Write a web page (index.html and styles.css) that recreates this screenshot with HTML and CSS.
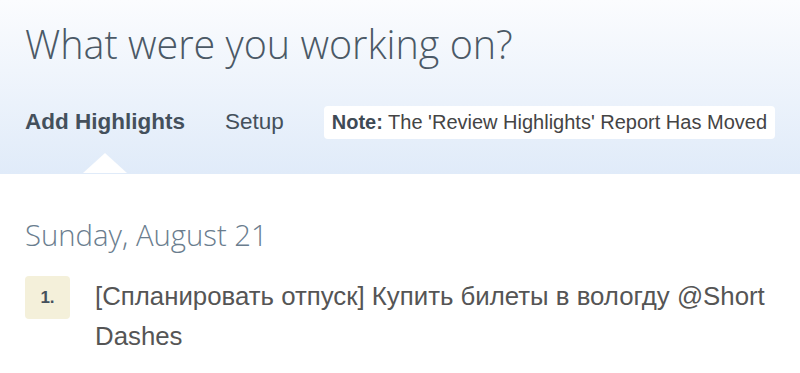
FILE: index.html
```html
<!DOCTYPE html>
<html lang="en">
<head>
    <meta charset="UTF-8">
    <title>What were you working on?</title>
    <link rel="stylesheet" href="styles.css">
</head>
<body>

<div class="header">
    <h1>What were you working on?</h1>
    <div class="nav">
        <a class="tab active" href="#">Add Highlights</a>
        <a class="tab" href="#">Setup</a>
        <span class="note"><b>Note:</b> The 'Review Highlights' Report Has Moved</span>
    </div>
</div>

<div class="content">
    <h2>Sunday, August 21</h2>
    <div class="highlight">
        <span class="num">1.</span>
        <span class="text">[Спланировать отпуск] Купить билеты в вологду @Short Dashes</span>
    </div>
</div>

</body>
</html>
```

FILE: styles.css
```css
body {
    margin: 0;
    font-family: "Liberation Sans", Arial, sans-serif;
    background-color: #fff;
    color: #555;
}
.header {
    background: linear-gradient(to bottom, #fbfcfe 0%, #e0ebf9 100%);
    padding: 19px 25px 0 25px;
    box-sizing: border-box;
    height: 174px;
}
h1 {
    font-family: "Open Sans", sans-serif;
    font-weight: 300;
    font-size: 39.5px;
    color: #4b5966;
    margin: 0;
    line-height: 50px;
}
.nav {
    display: flex;
    align-items: center;
    margin-top: 36px;
    height: 34px;
}
.tab {
    position: relative;
    font-size: 22.5px;
    color: #44505c;
    text-decoration: none;
    margin-right: 40px;
}
.tab.active {
    font-weight: bold;
}
.tab.active:after {
    content: "";
    position: absolute;
    left: 58px;
    top: 44px;
    border-left: 22px solid transparent;
    border-right: 22px solid transparent;
    border-bottom: 20px solid #fff;
}
.note {
    background: #fff;
    border-radius: 4px;
    padding: 5px 8px;
    font-size: 20px;
    color: #444;
}
.note b {
    color: #3f4a55;
}
.content {
    padding: 0 25px;
}
h2 {
    font-family: "Open Sans", sans-serif;
    font-weight: 300;
    font-size: 29.3px;
    color: #6a7d8e;
    margin: 42px 0 0 0;
    line-height: 38px;
}
.highlight {
    display: flex;
    align-items: flex-start;
    margin-top: 22px;
}
.num {
    flex: none;
    width: 45px;
    height: 43px;
    line-height: 43px;
    text-align: center;
    background: #f4f0da;
    border-radius: 4px;
    font-size: 17px;
    font-weight: bold;
    color: #44505c;
    margin-right: 25px;
}
.text {
    font-size: 25.8px;
    line-height: 40px;
    color: #555;
}
```
